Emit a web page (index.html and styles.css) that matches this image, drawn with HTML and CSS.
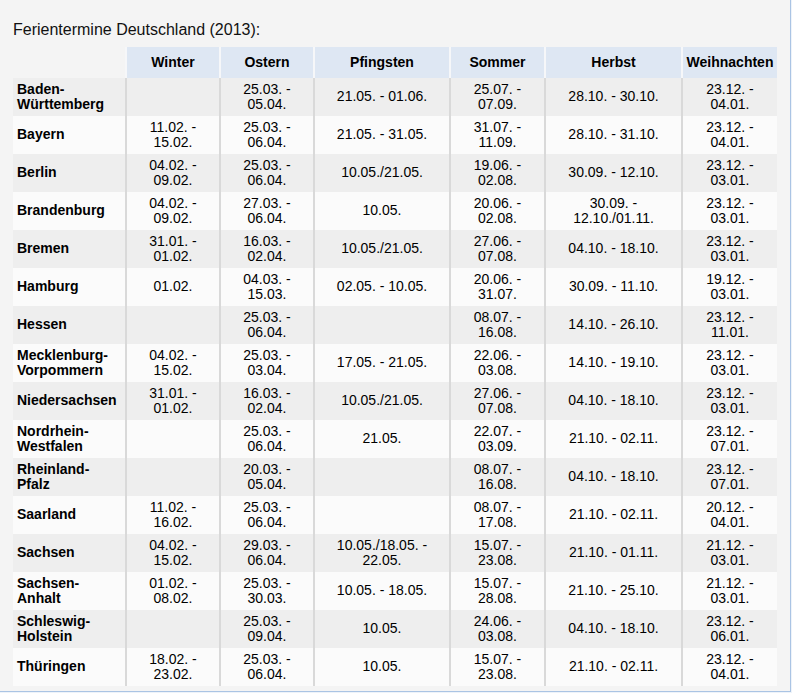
FILE: index.html
```html
<!DOCTYPE html>
<html lang="de">
<head>
<meta charset="utf-8">
<title>Ferientermine Deutschland (2013)</title>
<link rel="stylesheet" href="styles.css">
</head>
<body>
<div class="panel">
  <p class="title">Ferientermine Deutschland (2013):</p>
  <table class="ferien">
    <colgroup>
      <col class="c-land"><col class="c-winter"><col class="c-ostern"><col class="c-pfingsten"><col class="c-sommer"><col class="c-herbst"><col class="c-weih">
    </colgroup>
    <thead>
      <tr><th class="corner"></th><th>Winter</th><th>Ostern</th><th>Pfingsten</th><th>Sommer</th><th>Herbst</th><th>Weihnachten</th></tr>
    </thead>
    <tbody>
      <tr><th>Baden-Württemberg</th><td></td><td>25.03. - 05.04.</td><td>21.05. - 01.06.</td><td>25.07. - 07.09.</td><td>28.10. - 30.10.</td><td>23.12. - 04.01.</td></tr>
      <tr><th>Bayern</th><td>11.02. - 15.02.</td><td>25.03. - 06.04.</td><td>21.05. - 31.05.</td><td>31.07. - 11.09.</td><td>28.10. - 31.10.</td><td>23.12. - 04.01.</td></tr>
      <tr><th>Berlin</th><td>04.02. - 09.02.</td><td>25.03. - 06.04.</td><td>10.05./21.05.</td><td>19.06. - 02.08.</td><td>30.09. - 12.10.</td><td>23.12. - 03.01.</td></tr>
      <tr><th>Brandenburg</th><td>04.02. - 09.02.</td><td>27.03. - 06.04.</td><td>10.05.</td><td>20.06. - 02.08.</td><td>30.09. - 12.10./01.11.</td><td>23.12. - 03.01.</td></tr>
      <tr><th>Bremen</th><td>31.01. - 01.02.</td><td>16.03. - 02.04.</td><td>10.05./21.05.</td><td>27.06. - 07.08.</td><td>04.10. - 18.10.</td><td>23.12. - 03.01.</td></tr>
      <tr><th>Hamburg</th><td>01.02.</td><td>04.03. - 15.03.</td><td>02.05. - 10.05.</td><td>20.06. - 31.07.</td><td>30.09. - 11.10.</td><td>19.12. - 03.01.</td></tr>
      <tr><th>Hessen</th><td></td><td>25.03. - 06.04.</td><td></td><td>08.07. - 16.08.</td><td>14.10. - 26.10.</td><td>23.12. - 11.01.</td></tr>
      <tr><th>Mecklenburg-Vorpommern</th><td>04.02. - 15.02.</td><td>25.03. - 03.04.</td><td>17.05. - 21.05.</td><td>22.06. - 03.08.</td><td>14.10. - 19.10.</td><td>23.12. - 03.01.</td></tr>
      <tr><th>Niedersachsen</th><td>31.01. - 01.02.</td><td>16.03. - 02.04.</td><td>10.05./21.05.</td><td>27.06. - 07.08.</td><td>04.10. - 18.10.</td><td>23.12. - 03.01.</td></tr>
      <tr><th>Nordrhein-Westfalen</th><td></td><td>25.03. - 06.04.</td><td>21.05.</td><td>22.07. - 03.09.</td><td>21.10. - 02.11.</td><td>23.12. - 07.01.</td></tr>
      <tr><th>Rheinland-Pfalz</th><td></td><td>20.03. - 05.04.</td><td></td><td>08.07. - 16.08.</td><td>04.10. - 18.10.</td><td>23.12. - 07.01.</td></tr>
      <tr><th>Saarland</th><td>11.02. - 16.02.</td><td>25.03. - 06.04.</td><td></td><td>08.07. - 17.08.</td><td>21.10. - 02.11.</td><td>20.12. - 04.01.</td></tr>
      <tr><th>Sachsen</th><td>04.02. - 15.02.</td><td>29.03. - 06.04.</td><td>10.05./18.05. - 22.05.</td><td>15.07. - 23.08.</td><td>21.10. - 01.11.</td><td>21.12. - 03.01.</td></tr>
      <tr><th>Sachsen-Anhalt</th><td>01.02. - 08.02.</td><td>25.03. - 30.03.</td><td>10.05. - 18.05.</td><td>15.07. - 28.08.</td><td>21.10. - 25.10.</td><td>21.12. - 03.01.</td></tr>
      <tr><th>Schleswig-Holstein</th><td></td><td>25.03. - 09.04.</td><td>10.05.</td><td>24.06. - 03.08.</td><td>04.10. - 18.10.</td><td>23.12. - 06.01.</td></tr>
      <tr><th>Thüringen</th><td>18.02. - 23.02.</td><td>25.03. - 06.04.</td><td>10.05.</td><td>15.07. - 23.08.</td><td>21.10. - 02.11.</td><td>23.12. - 04.01.</td></tr>
    </tbody>
  </table>
</div>
</body>
</html>
```

FILE: styles.css
```css
html, body {
  margin: 0;
  padding: 0;
  background: #eef3f9;
}

.panel {
  box-sizing: border-box;
  width: 791px;
  height: 692px;
  padding: 22px 0 0 13px;
  background: #f4f4f4;
  border-right: 1px solid #aac4e4;
  border-bottom: 1px solid #aac4e4;
  font-family: "Liberation Sans", Arial, Helvetica, sans-serif;
  color: #000;
}

.title {
  margin: 0 0 9px 0;
  font-size: 16px;
  line-height: 16px;
  color: #111;
}

.ferien {
  table-layout: fixed;
  border-collapse: separate;
  border-spacing: 0;
  width: 764px;
  font-size: 14px;
  line-height: 15.5px;
}

.c-land { width: 112px; }
.c-winter { width: 94px; }
.c-ostern { width: 94px; }
.c-pfingsten { width: 136px; }
.c-sommer { width: 95px; }
.c-herbst { width: 137px; }
.c-weih { width: 96px; }

.ferien th,
.ferien td {
  box-sizing: border-box;
  padding: 0 4px;
  vertical-align: middle;
}

.ferien thead th {
  height: 31px;
  background: #dee7f3;
  font-weight: bold;
  text-align: center;
  border-left: 2px solid #f6f7f9;
  padding: 0 2px;
}

.ferien thead th.corner {
  background: transparent;
  border-left: 0;
}

.ferien tbody tr {
  height: 38px;
}

.ferien tbody th {
  text-align: left;
  font-weight: bold;
  padding: 0 5px 0 4px;
}

.ferien tbody td {
  text-align: center;
  border-left: 2px solid #d9d9d9;
}

.ferien tbody tr:nth-child(odd) th,
.ferien tbody tr:nth-child(odd) td {
  background: #eeeeee;
}

.ferien tbody tr:nth-child(even) th,
.ferien tbody tr:nth-child(even) td {
  background: #fbfbfb;
}
```
